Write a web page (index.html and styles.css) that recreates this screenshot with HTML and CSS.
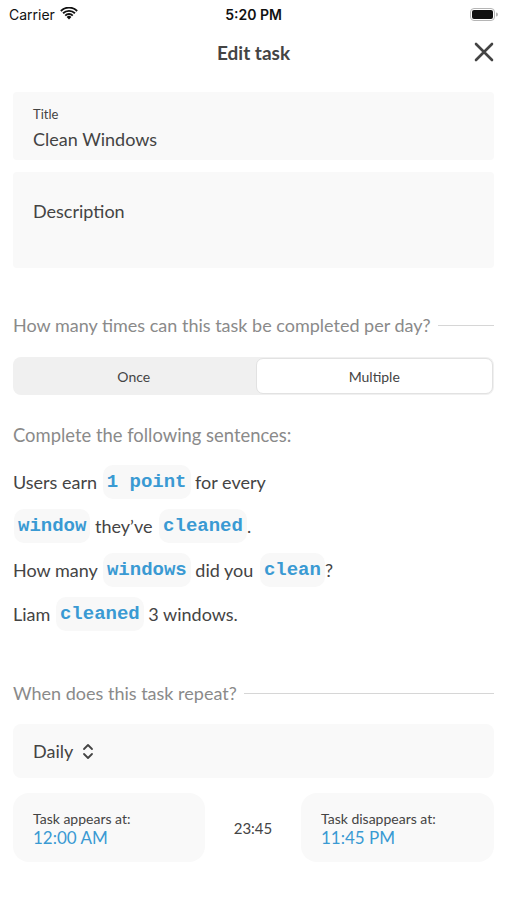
FILE: index.html
```html
<!DOCTYPE html>
<html>
<head>
<meta charset="utf-8">
<link rel="stylesheet" href="styles.css">
</head>
<body>
<div class="screen">
  <div class="statusbar">
    <div class="sb-left">
      <span class="carrier">Carrier</span>
      <svg class="wifi" width="18" height="13" viewBox="0 0 18 13">
        <path d="M9 12.6 L6.6 10 A3.4 3.4 0 0 1 11.4 10 Z" fill="#111"/>
        <path d="M4.6 7.9 A6.3 6.3 0 0 1 13.4 7.9 L12.1 9.3 A4.4 4.4 0 0 0 5.9 9.3 Z" fill="#111"/>
        <path d="M2.4 5.6 A9.4 9.4 0 0 1 15.6 5.6 L14.3 7 A7.5 7.5 0 0 0 3.7 7 Z" fill="#111"/>
        <path d="M0.2 3.3 A12.5 12.5 0 0 1 17.8 3.3 L16.5 4.7 A10.6 10.6 0 0 0 1.5 4.7 Z" fill="#111"/>
      </svg>
    </div>
    <div class="sb-time">5:20 PM</div>
    <div class="sb-right">
      <svg width="28" height="13" viewBox="0 0 28 13">
        <rect x="0.5" y="0.5" width="24" height="12" rx="3.5" fill="none" stroke="#b5b5b5"/>
        <rect x="2" y="2" width="21" height="9" rx="2" fill="#111"/>
        <path d="M26 4.5 A2 2 0 0 1 26 8.5 Z" fill="#b5b5b5"/>
      </svg>
    </div>
  </div>

  <div class="navbar">
    <div class="nav-title">Edit task</div>
    <svg class="close" width="20" height="20" viewBox="0 0 20 20">
      <path d="M2 2 L18 18 M18 2 L2 18" stroke="#444" stroke-width="2.6" stroke-linecap="round"/>
    </svg>
  </div>

  <div class="content">
    <div class="field field-title">
      <div class="field-label">Title</div>
      <div class="field-value">Clean Windows</div>
    </div>
    <div class="field field-desc">
      <div class="field-placeholder">Description</div>
    </div>

    <div class="section-head sh-first">
      <span>How many times can this task be completed per day?</span>
      <div class="rule"></div>
    </div>

    <div class="segmented">
      <div class="seg">Once</div>
      <div class="seg seg-active">Multiple</div>
    </div>

    <div class="plain-head">Complete the following sentences:</div>

    <div class="sentences">
      <div class="sentence">Users earn <span class="chip">1 point</span> for every</div>
      <div class="sentence"><span class="chip">window</span> they’ve <span class="chip">cleaned</span>.</div>
      <div class="sentence">How many <span class="chip">windows</span> did you <span class="chip">clean</span>?</div>
      <div class="sentence">Liam <span class="chip">cleaned</span> 3 windows.</div>
    </div>

    <div class="section-head sh-second">
      <span>When does this task repeat?</span>
      <div class="rule"></div>
    </div>

    <div class="daily">
      <span>Daily</span>
      <svg width="12" height="17" viewBox="0 0 12 17">
        <path d="M2 6 L6 2 L10 6 M2 11 L6 15 L10 11" fill="none" stroke="#444" stroke-width="1.8" stroke-linecap="round" stroke-linejoin="round"/>
      </svg>
    </div>

    <div class="times">
      <div class="time-card">
        <div class="time-label">Task appears at:</div>
        <div class="time-value">12:00 AM</div>
      </div>
      <div class="duration">23:45</div>
      <div class="time-card">
        <div class="time-label">Task disappears at:</div>
        <div class="time-value">11:45 PM</div>
      </div>
    </div>
  </div>
</div>
</body>
</html>
```

FILE: styles.css
```css
* { box-sizing: border-box; }
html, body { margin: 0; padding: 0; background: #fff; }
body { font-family: Lato, "Noto Sans", sans-serif; color: #444; }
.screen { width: 507px; height: 900px; overflow: hidden; }

.statusbar {
  height: 28px;
  display: grid;
  grid-template-columns: 1fr auto 1fr;
  align-items: center;
  padding: 0 9px;
  font-family: Inter, "Liberation Sans", sans-serif;
  color: #111;
}
.sb-left { display: flex; align-items: center; gap: 5px; }
.carrier { font-size: 14px; }
.wifi { margin-top: -2px; }
.sb-time { font-size: 14px; font-weight: 600; }
.sb-right { display: flex; justify-content: flex-end; }

.navbar {
  height: 48px;
  display: flex;
  align-items: center;
  justify-content: center;
  position: relative;
}
.nav-title { font-size: 19px; font-weight: 700; color: #444; }
.close { position: absolute; right: 13px; top: 14px; }

.content { padding: 16px 13px 0; }

.field { background: #f9f9f9; border-radius: 4px; padding: 0 20px; }
.field-title { height: 68px; padding-top: 14px; }
.field-label { font-size: 13px; line-height: 17px; color: #444; }
.field-value { font-size: 18px; line-height: 26px; margin-top: 3px; }
.field-desc { height: 96px; margin-top: 12px; padding-top: 27px; }
.field-placeholder { font-size: 18px; line-height: 24px; }

.section-head {
  display: flex;
  align-items: center;
  font-size: 18px;
  line-height: 22px;
  color: #8a8a8a;
}
.section-head .rule { flex: 1; height: 1px; background: #d6d6d6; margin-left: 7px; }
.sh-first { margin-top: 46px; }
.sh-second { margin-top: 46px; }

.segmented {
  margin-top: 21px;
  height: 38px;
  background: #f0f0f0;
  border-radius: 8px;
  display: grid;
  grid-template-columns: 1fr 1fr;
  padding: 1px;
  font-size: 14px;
}
.seg { display: flex; align-items: center; justify-content: center; color: #444; }
.seg-active { background: #fff; border: 1px solid #e2e2e2; border-radius: 7px; margin-left: 2px; }

.plain-head { margin-top: 29px; font-size: 18.4px; line-height: 22px; color: #8a8a8a; }

.sentences { margin-top: 14px; }
.sentence {
  height: 44px;
  display: flex;
  align-items: center;
  font-size: 18px;
  color: #444;
  white-space: pre;
}
.chip {
  font-family: "Liberation Mono", "Courier New", monospace;
  font-weight: 700;
  font-size: 19px;
  color: #3a9ad3;
  background: #f8f8f8;
  border-radius: 10px;
  padding: 0 4px;
  height: 34px;
  display: inline-flex;
  align-items: center;
  margin: 0 0 0 2px;
}
.sentence > .chip:first-child { margin-left: 1px; }

.daily {
  margin-top: 20px;
  height: 54px;
  background: #f9f9f9;
  border-radius: 8px;
  display: flex;
  align-items: center;
  gap: 9px;
  padding: 0 20px;
  font-size: 18px;
}

.times {
  margin-top: 15px;
  display: grid;
  grid-template-columns: 192px 1fr 193px;
  align-items: center;
}
.time-card {
  height: 69px;
  background: #f9f9f9;
  border-radius: 16px;
  padding: 17px 20px 0;
}
.time-label { font-size: 14px; line-height: 17px; color: #444; }
.time-value { font-size: 17px; line-height: 22px; color: #3a9ad3; }
.duration { text-align: center; font-size: 15px; color: #444; }
```
